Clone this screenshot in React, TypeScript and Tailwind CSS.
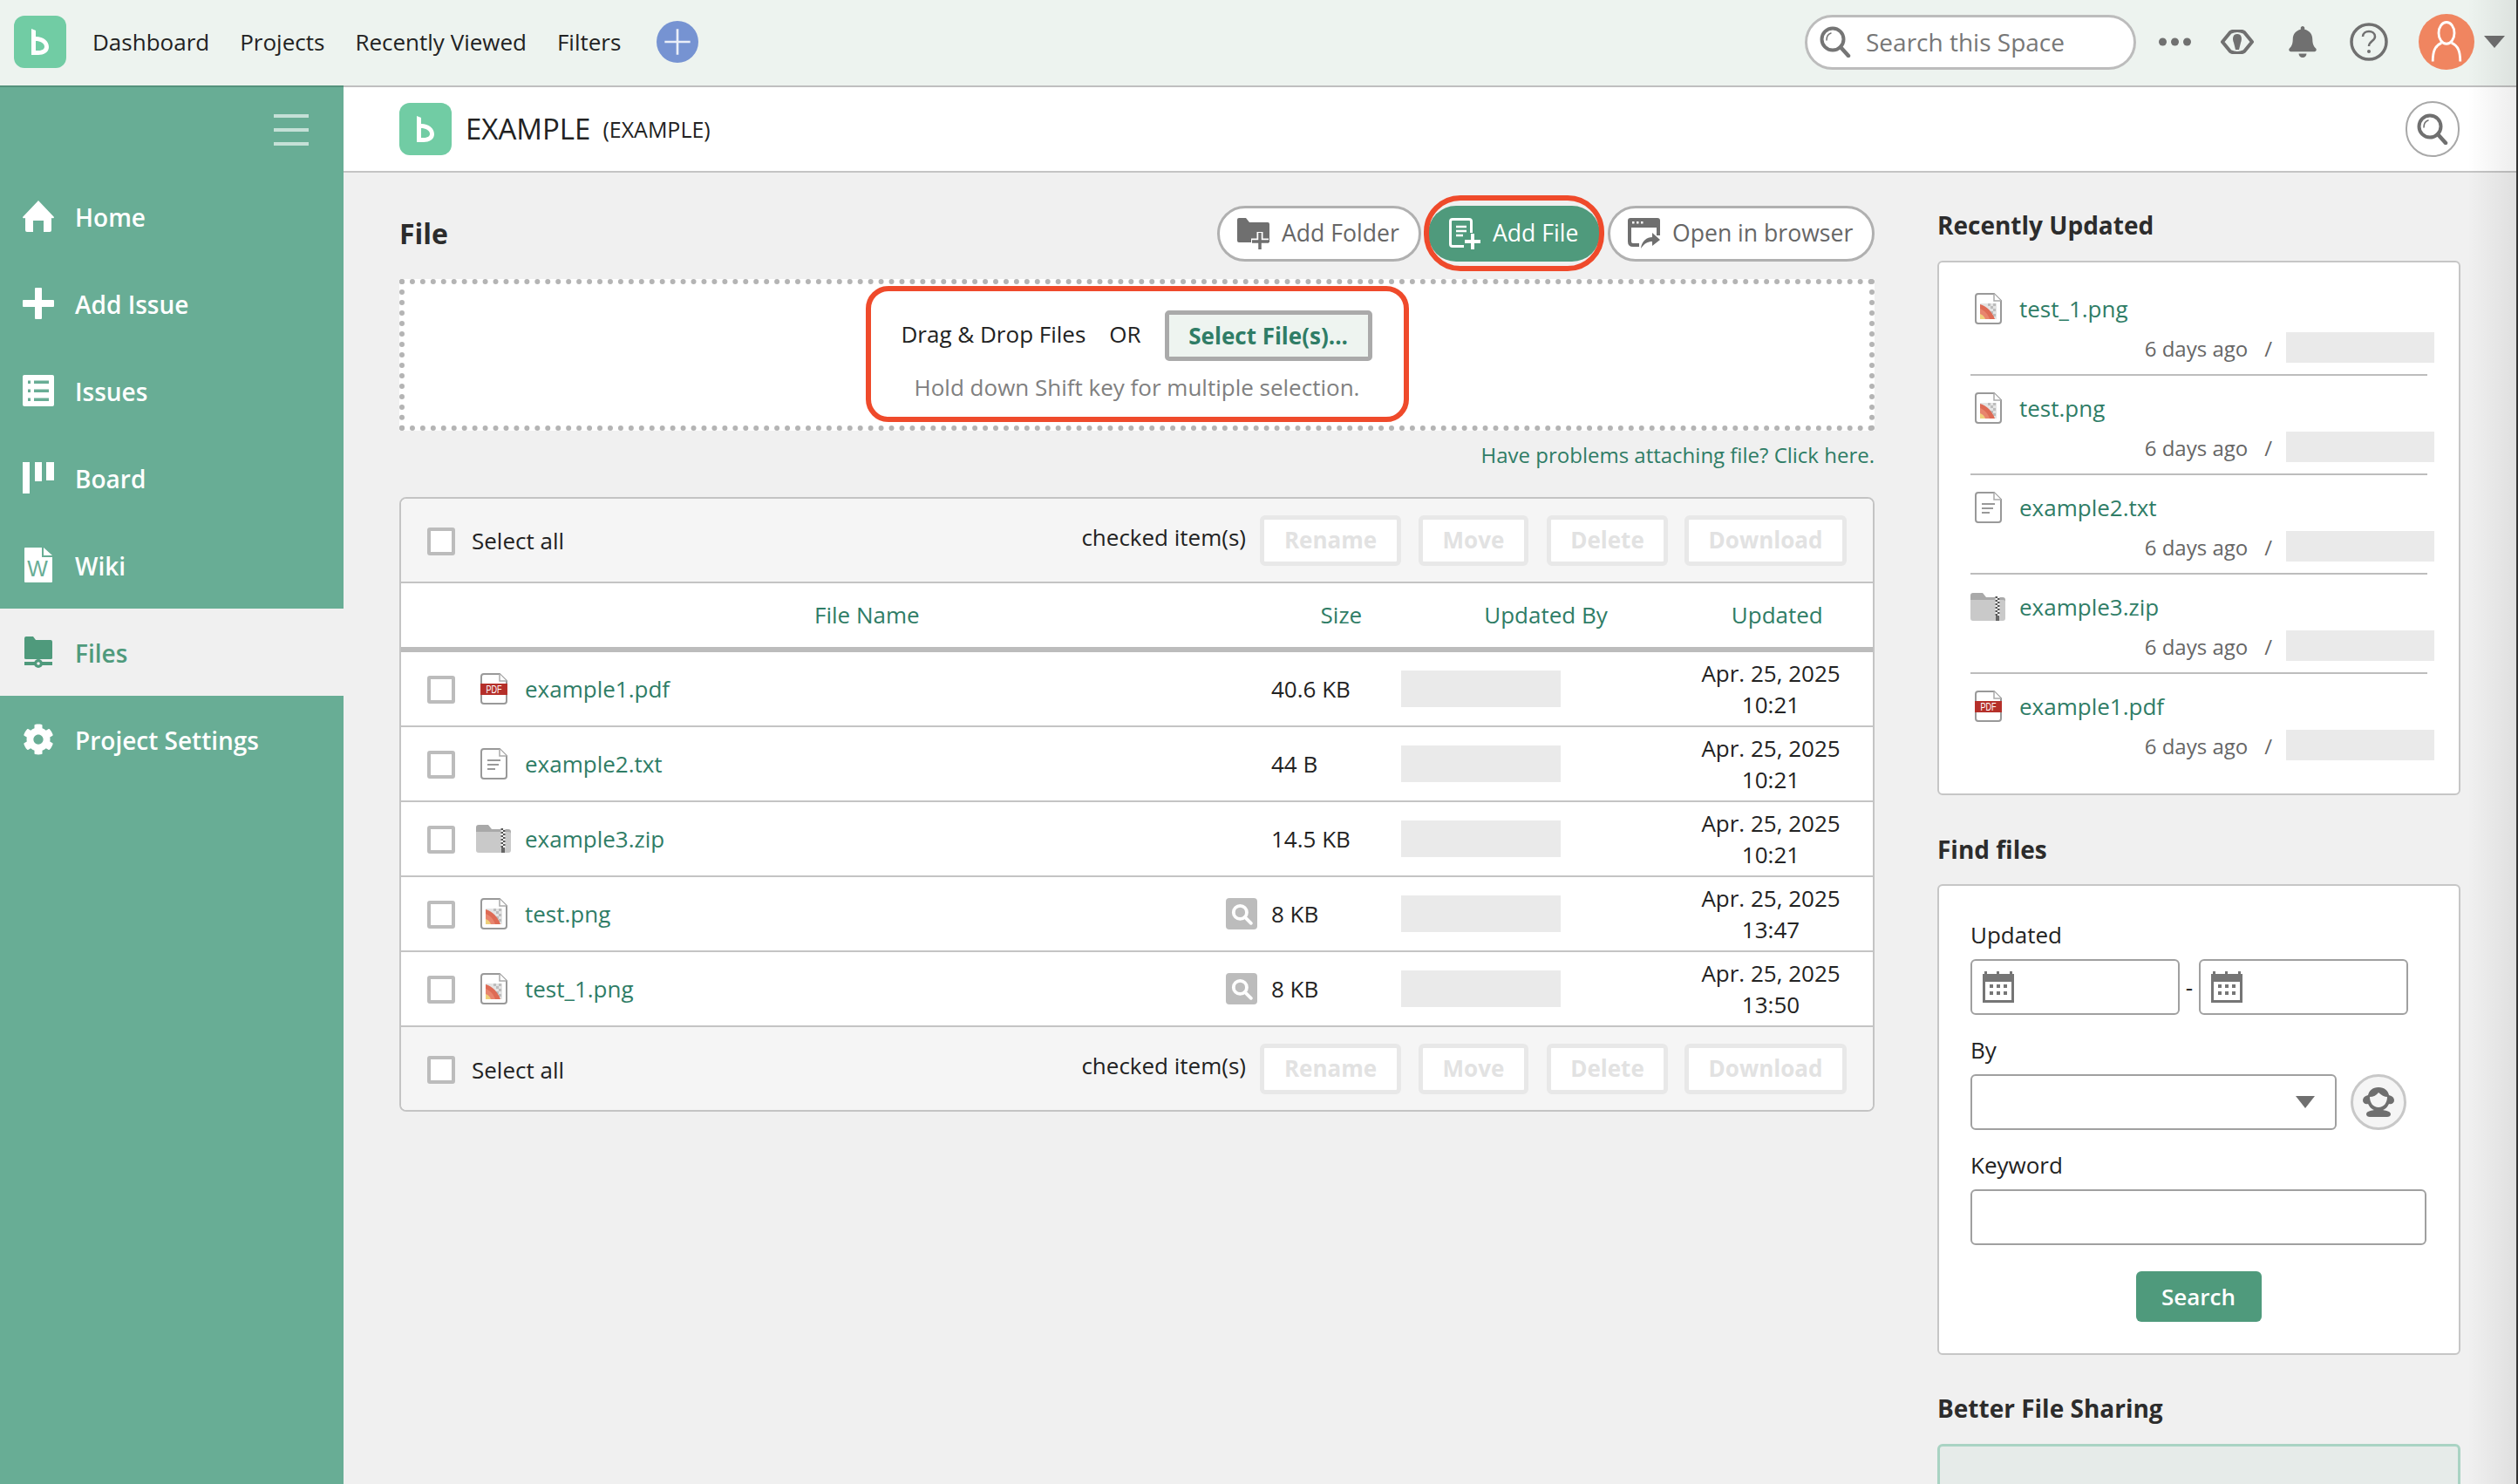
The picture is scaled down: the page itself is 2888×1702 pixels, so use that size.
import { FaBell, FaCog } from "react-icons/fa";

const files = [
  { name: "example1.pdf", kind: "pdf", size: "40.6 KB", time: "10:21" },
  { name: "example2.txt", kind: "txt", size: "44 B", time: "10:21" },
  { name: "example3.zip", kind: "zip", size: "14.5 KB", time: "10:21" },
  { name: "test.png", kind: "png", size: "8 KB", time: "13:47", preview: true },
  { name: "test_1.png", kind: "png", size: "8 KB", time: "13:50", preview: true },
];

const recent = [
  { name: "test_1.png", kind: "png" },
  { name: "test.png", kind: "png" },
  { name: "example2.txt", kind: "txt" },
  { name: "example3.zip", kind: "zip" },
  { name: "example1.pdf", kind: "pdf" },
];

function BacklogLogo() {
  return (
    <div className="flex h-[60px] w-[60px] shrink-0 items-center justify-center rounded-[12px] bg-[#71cca4]">
      <svg viewBox="0 0 60 60" className="h-[60px] w-[60px]">
        <path
          fill="#fff"
          fillRule="evenodd"
          d="M20 15 L25 17 V24 C34 24 40 29 40 36 C40 42 34 45 28 45 H20 Z M25 29 V40 H28 C32 40 35 38.5 35 35.5 C35 31.5 30 29 25 29 Z"
        />
      </svg>
    </div>
  );
}

function SearchIcon({ color = "#757575", className = "h-[36px] w-[36px]" }: { color?: string; className?: string }) {
  return (
    <svg viewBox="0 0 36 36" className={className} fill="none">
      <circle cx="15" cy="15" r="12.5" stroke={color} strokeWidth="4" />
      <path d="M24 24 L33 34" stroke={color} strokeWidth="4.5" strokeLinecap="round" />
      <path d="M8 16 C8 12 10 9 13 8" stroke={color} strokeWidth="1.5" strokeLinecap="round" />
    </svg>
  );
}

function FileIcon({ kind }: { kind: string }) {
  if (kind === "zip") {
    return (
      <svg viewBox="0 0 40 32" className="h-[32px] w-[40px]">
        <path d="M0 3 Q0 0 3 0 H14 L18 5 H37 Q40 5 40 8 V12 H0 Z" fill="#a9a9a9" />
        <path d="M0 8 H37 Q40 8 40 10 V29 Q40 32 37 32 H3 Q0 32 0 29 Z" fill="#c9c9c9" />
        <rect x="28.5" y="4" width="5" height="23" fill="#f2f2f2" />
        <path d="M28.5 4 h2.5 v2 h-2.5 z M31 6 h2.5 v2 h-2.5 z M28.5 8 h2.5 v2 h-2.5 z M31 10 h2.5 v2 h-2.5 z M28.5 12 h2.5 v2 h-2.5 z M31 14 h2.5 v2 h-2.5 z M28.5 16 h2.5 v2 h-2.5 z M31 18 h2.5 v2 h-2.5 z M28.5 20 h2.5 v2 h-2.5 z M31 22 h2.5 v2 h-2.5 z M28.5 24 h2.5 v2 h-2.5 z" fill="#555" />
        <rect x="29" y="26" width="4" height="6" fill="#666" />
      </svg>
    );
  }
  return (
    <svg viewBox="0 0 31 36" className="h-[36px] w-[31px]">
      <path
        d="M4 1 H22 L30 9 V32 Q30 35 27 35 H4 Q1 35 1 32 V4 Q1 1 4 1 Z"
        fill="#fff"
        stroke="#999"
        strokeWidth="2"
      />
      <path d="M22 1 V9 H30" fill="#fff" stroke="#aaa" strokeWidth="1.5" />
      {kind === "pdf" && (
        <>
          <rect x="0" y="12" width="31" height="13" fill="#b5302a" />
          <text
            x="15.5"
            y="23"
            textAnchor="middle"
            fontSize="13"
            textLength="18"
            lengthAdjust="spacingAndGlyphs"
            fill="#fff"
            fontFamily="'Liberation Sans', sans-serif"
          >
            PDF
          </text>
        </>
      )}
      {kind === "txt" && <path d="M8 14 H23 M8 19 H21 M8 24 H17" stroke="#999" strokeWidth="2" />}
      {kind === "png" && (
        <>
          <rect x="6" y="12" width="19" height="18" fill="#e4e4e4" />
          <path d="M15 12 h3 v3 h-3 z M21 12 h3 v3 h-3 z M18 15 h3 v3 h-3 z M21 18 h3 v3 h-3 z M18 21 h3 v3 h-3 z M21 24 h3 v3 h-3 z" fill="#bdbdbd" />
          <path d="M6 13 C14 15 20 22 23 30 H6 Z" fill="#de6b55" />
          <path d="M6 18 C11 20 15 24 17 30 H6 Z" fill="#e8856e" />
          <path d="M6 24 C9 25 11 27 12 30 H6 Z" fill="#efcf7b" />
        </>
      )}
    </svg>
  );
}

function Checkbox({ className = "" }: { className?: string }) {
  return <span className={`block h-[32px] w-[32px] shrink-0 rounded-[3px] border-4 border-[#bcbcbc] bg-white ${className}`} />;
}

function ToolbarRow({ className, boxOffset }: { className: string; boxOffset: string }) {
  const disabled =
    "flex h-[58px] items-center justify-center rounded-[6px] border-[5px] border-[#e8e8e8] bg-white text-[26px] font-bold text-[#e2e2e2]";
  return (
    <div className={`flex items-center bg-[#f5f5f5] pl-[30px] pr-[30px] ${className}`}>
      <Checkbox className={boxOffset} />
      <span className={`ml-[19px] text-[26px] text-[#222] ${boxOffset}`}>Select all</span>
      <span className="ml-auto -mt-[6px] text-[26px] text-[#222]">checked item(s)</span>
      <div className={`ml-[16px] w-[162px] ${disabled}`}>Rename</div>
      <div className={`ml-[20px] w-[126px] ${disabled}`}>Move</div>
      <div className={`ml-[21px] w-[139px] ${disabled}`}>Delete</div>
      <div className={`ml-[19px] w-[186px] ${disabled}`}>Download</div>
    </div>
  );
}

function NavItem({ label, active, children }: { label: string; active?: boolean; children: React.ReactNode }) {
  return (
    <div
      className={`flex h-[100px] items-center pl-[26px] ${
        active ? "bg-[#f0f0f0] text-[#4f9a7c]" : "text-white"
      }`}
    >
      <span className="flex h-[40px] w-[36px] shrink-0 items-center justify-center">{children}</span>
      <span className="ml-[24px] mt-[1px] text-[28px] font-semibold">{label}</span>
    </div>
  );
}

function CalendarIcon() {
  return (
    <svg viewBox="0 0 36 36" className="h-[36px] w-[36px]">
      <path fill="#757575" d="M2 3 H36 V36 H0 V3 Z M3 12 V33 H33 V12 Z" fillRule="evenodd" />
      <rect x="2" y="0" width="3" height="5" fill="#757575" />
      <rect x="16" y="0" width="3" height="5" fill="#757575" />
      <rect x="31" y="0" width="3" height="5" fill="#757575" />
      <path d="M8 15 h4 v4 h-4 z M16 15 h4 v4 h-4 z M24 15 h4 v4 h-4 z M8 23 h4 v4 h-4 z M16 23 h4 v4 h-4 z M24 23 h4 v4 h-4 z" fill="#757575" />
    </svg>
  );
}

export default function App() {
  return (
    <div className="relative flex h-[1702px] w-[2888px] flex-col overflow-hidden bg-[#f0f0f0] font-['Open_Sans',sans-serif] text-[26px] text-[#222]">
      {/* top bar */}
      <header className="flex h-[100px] shrink-0 items-center border-b-[2px] border-[#bfbfbf] bg-[#edf3ef] pb-[2px] pl-[16px]">
        <BacklogLogo />
        <nav className="ml-[30px] flex items-center gap-[35px] text-[26px] text-[#222]">
          <span>Dashboard</span>
          <span>Projects</span>
          <span>Recently Viewed</span>
          <span>Filters</span>
        </nav>
        <span className="ml-[41px] flex h-[48px] w-[48px] items-center justify-center rounded-full bg-[#7693d2]">
          <svg viewBox="0 0 24 24" className="h-[32px] w-[32px]">
            <path d="M12 1 V23 M1 12 H23" stroke="#fff" strokeWidth="2" opacity="0.85" />
          </svg>
        </span>

        <div className="ml-auto flex h-[63px] w-[380px] items-center rounded-full border-[3px] border-[#bcbcbc] bg-white pl-[14px]">
          <SearchIcon />
          <span className="ml-[17px] text-[28px] text-[#777]">Search this Space</span>
        </div>
        <svg viewBox="0 0 37 10" className="ml-[26px] h-[10px] w-[37px]">
          <circle cx="4.5" cy="5" r="4.5" fill="#707070" />
          <circle cx="18.5" cy="5" r="4.5" fill="#707070" />
          <circle cx="32.5" cy="5" r="4.5" fill="#707070" />
        </svg>
        <svg viewBox="0 0 38 28" className="ml-[34px] h-[28px] w-[38px]">
          <path d="M2 14 L11 3 Q19 -1 27 3 L36 14 L27 25 Q19 29 11 25 Z" fill="none" stroke="#707070" strokeWidth="4" strokeLinejoin="round" />
          <path d="M19 5 C24 5 25 10 23 15 L21 23 H17 L15 15 C13 10 14 5 19 5 Z" fill="#707070" />
        </svg>
        <FaBell className="ml-[37px] h-[36px] w-[38px] text-[#707070]" />
        <svg viewBox="0 0 44 44" className="ml-[35px] h-[44px] w-[44px]">
          <circle cx="22" cy="22" r="20" fill="none" stroke="#707070" strokeWidth="3.5" />
          <path d="M15 16 C15 8 29 8 29 16 C29 21 22 21 22 27" fill="none" stroke="#707070" strokeWidth="2.5" />
          <circle cx="22" cy="33" r="2" fill="#707070" />
        </svg>
        <span className="ml-[35px] flex h-[64px] w-[64px] items-center justify-center rounded-full bg-[#f08560]">
          <svg viewBox="0 0 32 44" className="h-[50px] w-[36px]" fill="none" stroke="#fff" strokeWidth="2.5">
            <ellipse cx="16" cy="13" rx="8" ry="11" />
            <path d="M11 23 C4 26 2 32 2 42 M21 23 C28 26 30 32 30 42" />
          </svg>
        </span>
        <svg viewBox="0 0 24 14" className="ml-[11px] mr-[15px] h-[14px] w-[24px]">
          <path d="M0 0 H24 L12 14 Z" fill="#6f6f6f" />
        </svg>
      </header>

      <div className="flex min-h-0 flex-1">
        {/* sidebar */}
        <aside className="-mt-[2px] w-[394px] shrink-0 border-t-[2px] border-[#54927c] bg-[#68ad95]">
          <div className="flex h-[98px] flex-col items-end gap-[12px] pr-[40px] pt-[31px]">
            <span className="block h-[4px] w-[40px] bg-[#c5e0d7]" />
            <span className="block h-[4px] w-[40px] bg-[#c5e0d7]" />
            <span className="block h-[4px] w-[40px] bg-[#c5e0d7]" />
          </div>
          <NavItem label="Home">
            <svg viewBox="0 0 36 36" className="h-[36px] w-[36px]">
              <path
                fill="#fff"
                d="M18 0 L36 19 Q36 21 33 20 V34 Q33 36 31 36 H24 V23 H12 V36 H5 Q3 36 3 34 V20 Q0 21 0 19 Z"
              />
            </svg>
          </NavItem>
          <NavItem label="Add Issue">
            <svg viewBox="0 0 36 36" className="h-[36px] w-[36px]">
              <path fill="#fff" d="M14 1 Q14 0 15 0 H21 Q22 0 22 1 V14 H35 Q36 14 36 15 V21 Q36 22 35 22 H22 V35 Q22 36 21 36 H15 Q14 36 14 35 V22 H1 Q0 22 0 21 V15 Q0 14 1 14 H14 Z" />
            </svg>
          </NavItem>
          <NavItem label="Issues">
            <svg viewBox="0 0 36 36" className="h-[36px] w-[36px]">
              <rect width="36" height="36" rx="2" fill="#fff" />
              <path d="M6 6.5 H9 V10 H6 Z M13 6.5 H30 V10 H13 Z M6 16.5 H9 V20 H6 Z M13 16.5 H30 V20 H13 Z M6 26.5 H9 V30 H6 Z M13 26.5 H30 V30 H13 Z" fill="#68ad95" />
            </svg>
          </NavItem>
          <NavItem label="Board">
            <svg viewBox="0 0 36 36" className="h-[36px] w-[36px]">
              <path fill="#fff" d="M0 0 H8 V36 H0 Z M14 0 H22 V22 H14 Z M27 0 H36 V21 H27 Z" />
            </svg>
          </NavItem>
          <NavItem label="Wiki">
            <svg viewBox="0 0 32 40" className="h-[40px] w-[32px]">
              <path fill="#fff" d="M1 0 H20 V11 H32 V39 Q32 40 31 40 H1 Q0 40 0 39 V1 Q0 0 1 0 Z M22 0 L32 9 H22 Z" />
              <text x="15" y="33" textAnchor="middle" fontSize="25" fill="#68ad95" fontFamily="'Liberation Sans', sans-serif">
                W
              </text>
            </svg>
          </NavItem>
          <NavItem label="Files" active>
            <svg viewBox="0 0 32 36" className="h-[36px] w-[32px]">
              <path fill="#4f9a7c" d="M0 2 Q0 0 2 0 H10 L13 4 H30 Q32 4 32 6 V25 Q32 26 30 26 H2 Q0 26 0 25 Z" />
              <rect x="0" y="29" width="32" height="4" fill="#4f9a7c" />
              <circle cx="16" cy="31" r="5" fill="#4f9a7c" />
              <circle cx="16" cy="31" r="1.8" fill="#f0f0f0" />
            </svg>
          </NavItem>
          <NavItem label="Project Settings">
            <FaCog className="h-[36px] w-[36px]" />
          </NavItem>
        </aside>

        <main className="min-w-0 flex-1">
          {/* project header */}
          <div className="flex h-[98px] items-center border-b-[2px] border-[#c4c4c4] bg-white pl-[64px] pr-[67px]">
            <BacklogLogo />
            <span className="ml-[16px] text-[33px] font-medium text-[#222]">EXAMPLE</span>
            <span className="ml-[14px] mt-[2px] text-[25px] font-medium text-[#222]">(EXAMPLE)</span>
            <span className="ml-auto flex h-[64px] w-[62px] items-center justify-center rounded-full border-[2px] border-[#a8a8a8] bg-white">
              <SearchIcon color="#707070" />
            </span>
          </div>

          <div className="flex gap-[72px] pl-[64px]">
            {/* left column */}
            <div className="w-[1692px] shrink-0 pt-[38px]">
              <div className="flex h-[64px] items-center">
                <h2 className="text-[32px] font-bold text-[#2c2c2c]">File</h2>
                <div className="ml-auto flex gap-[8px]">
                  <button className="flex h-[64px] w-[234px] items-center rounded-full border-[3px] border-[#b0b0b0] bg-white pl-[20px] text-[26.6px] text-[#666]">
                    <svg viewBox="0 0 37 36" className="h-[36px] w-[37px]">
                      <path fill="#6f6f6f" d="M0 2 Q0 0 2 0 H10 L14 5 H35 Q37 5 37 7 V28 H2 Q0 28 0 26 Z" />
                      <path d="M26 16 V36 M16 27 H36" stroke="#fff" strokeWidth="7" />
                      <path d="M26 17 V36 M17 27 H36" stroke="#6f6f6f" strokeWidth="3.5" />
                    </svg>
                    <span className="ml-[14px]">Add Folder</span>
                  </button>
                  <div className="relative">
                    <button className="flex h-[64px] w-[197px] items-center rounded-full bg-[#4f9a7c] pl-[24px] text-[26.6px] text-white">
                      <svg viewBox="0 0 36 36" className="h-[36px] w-[36px]" fill="none" stroke="#fff">
                        <path d="M4 1.5 H23 Q25.5 1.5 25.5 4 V17 M17 32.5 H4 Q1.5 32.5 1.5 30 V4 Q1.5 1.5 4 1.5" strokeWidth="3" />
                        <path d="M8 10 H20 M8 15 H20 M8 20 H16" strokeWidth="2.4" />
                        <path d="M27 18 V36 M18 27 H36" strokeWidth="4" />
                      </svg>
                      <span className="ml-[14px]">Add File</span>
                    </button>
                    <span className="absolute -bottom-[11px] -left-[5px] -right-[5px] -top-[12px] rounded-[42px] border-[6px] border-[#ef4a2b]" />
                  </div>
                  <button className="ml-[1px] flex h-[64px] w-[306px] items-center rounded-full border-[3px] border-[#b0b0b0] bg-white pl-[20px] text-[26.6px] text-[#666]">
                    <svg viewBox="0 0 37 36" className="h-[36px] w-[37px]" fill="none">
                      <path d="M3 0 H34 Q37 0 37 3 V11 H0 V3 Q0 0 3 0 Z" fill="#6f6f6f" />
                      <path d="M5 4 h2.5 v2.5 h-2.5 z M10 4 h2.5 v2.5 h-2.5 z M15 4 h2.5 v2.5 h-2.5 z" fill="#fff" />
                      <path d="M2 8 V27 Q2 31 6 31 H13 M35 8 V20" stroke="#6f6f6f" strokeWidth="4" />
                      <path d="M15 35 C16 26 22 22 28 22 V17 L37 25 L28 32 V27 C23 27 19 29 15 35 Z" fill="#6f6f6f" />
                    </svg>
                    <span className="ml-[14px]">Open in browser</span>
                  </button>
                </div>
              </div>

              {/* drop zone */}
              <div className="mt-[20px] flex h-[174px] justify-center border-[6px] border-dotted border-[#b4b4b4] bg-white pt-[2px]">
                <div className="h-[156px] w-[623px] rounded-[26px] border-[6px] border-[#ef4a2b]">
                  <div className="flex items-center pl-[35px] pt-[22px]">
                    <span className="-mt-[4px] text-[26px] text-[#222]">Drag &amp; Drop Files</span>
                    <span className="ml-[27px] -mt-[4px] text-[26px] text-[#222]">OR</span>
                    <button className="ml-[27px] flex h-[58px] w-[238px] items-center justify-center rounded-[5px] border-[5px] border-[#aaa] bg-[#eef4f0] text-[26px] font-bold text-[#2f7d66]">
                      Select File(s)...
                    </button>
                  </div>
                  <p className="mt-[12px] text-center text-[26px] leading-[36px] text-[#808080]">
                    Hold down Shift key for multiple selection.
                  </p>
                </div>
              </div>
              <p className="mt-[10px] text-right text-[24px] leading-[36px] text-[#2f7d66]">
                Have problems attaching file? Click here.
              </p>

              {/* table */}
              <div className="mt-[30px] overflow-hidden rounded-[8px] border-[2px] border-[#c4c4c4] bg-white">
                <ToolbarRow className="h-[97px] border-b-[2px] border-[#c4c4c4]" boxOffset="mt-[2px]" />
                <div className="flex h-[79px] items-center border-b-[6px] border-[#bcbcbc] pl-[474px] text-[26px] text-[#2f7d66]">
                  <span>File Name</span>
                  <span className="ml-[460px]">Size</span>
                  <span className="ml-[140px]">Updated By</span>
                  <span className="ml-[142px]">Updated</span>
                </div>
                {files.map((f) => (
                  <div
                    key={f.name}
                    className="grid h-[86px] grid-cols-[946px_201px_343px_162px] items-center border-b-[2px] border-[#c4c4c4]"
                  >
                    <div className="flex items-center pl-[30px]">
                      <Checkbox className="mt-[1px]" />
                      <span className="ml-[24px] flex w-[40px] justify-center">
                        <FileIcon kind={f.kind} />
                      </span>
                      <span className="ml-[16px] text-[#2f7d66]">{f.name}</span>
                    </div>
                    <div className="flex items-center">
                      <span className="flex h-[36px] w-[36px] items-center justify-center rounded-[4px] bg-[#bcbcbc]" style={{ visibility: f.preview ? "visible" : "hidden" }}>
                        <svg viewBox="0 0 24 24" className="h-[26px] w-[26px]" fill="none" stroke="#fff">
                          <circle cx="10.5" cy="10.5" r="7" strokeWidth="3.5" />
                          <path d="M15.5 15.5 L22 22" strokeWidth="3.5" strokeLinecap="round" />
                        </svg>
                      </span>
                      <span className="ml-[16px] text-[#222]">{f.size}</span>
                    </div>
                    <div className="h-[42px] w-[183px] bg-[#eaeaea]" />
                    <div className="text-center text-[26px] leading-[36px] text-[#222]">
                      Apr. 25, 2025
                      <br />
                      {f.time}
                    </div>
                  </div>
                ))}
                <ToolbarRow className="h-[95px]" boxOffset="mt-[3px]" />
              </div>
            </div>

            {/* right column */}
            <div className="w-[600px] shrink-0 pt-[42px]">
              <h3 className="text-[28px] font-bold leading-[36px] text-[#2c2c2c]">Recently Updated</h3>
              <div className="mt-[23px] h-[613px] rounded-[6px] border-[2px] border-[#c6c6c6] bg-white pl-[36px] pt-[35px]">
                {recent.map((r, i) => (
                  <div key={r.name} className="h-[114px] w-[524px]">
                    <div className="flex h-[36px] items-center">
                      <span className="flex w-[40px] justify-center">
                        <FileIcon kind={r.kind} />
                      </span>
                      <span className="ml-[16px] text-[#2f7d66]">{r.name}</span>
                    </div>
                    <div className="-mr-[8px] mt-[9px] flex h-[35px] items-center justify-end text-[24px] text-[#666]">
                      <span className="pt-[3px]">6 days ago</span>
                      <span className="ml-[19px] pt-[3px]">/</span>
                      <span className="ml-[16px] h-[35px] w-[170px] bg-[#eaeaea]" />
                    </div>
                    {i < recent.length - 1 && <div className="mt-[13px] h-[2px] bg-[#bdbdbd]" />}
                  </div>
                ))}
              </div>

              <h3 className="mt-[44px] text-[28px] font-bold leading-[36px] text-[#2c2c2c]">Find files</h3>
              <div className="mt-[22px] h-[540px] rounded-[6px] border-[2px] border-[#c6c6c6] bg-white pl-[36px] pr-[37px] pt-[38px]">
                <label className="block leading-[36px]">Updated</label>
                <div className="mt-[10px] flex items-center">
                  <div className="flex h-[64px] w-[240px] items-center rounded-[6px] border-[2px] border-[#a0a0a0] pl-[12px]">
                    <CalendarIcon />
                  </div>
                  <span className="w-[22px] text-center">-</span>
                  <div className="flex h-[64px] w-[240px] items-center rounded-[6px] border-[2px] border-[#a0a0a0] pl-[12px]">
                    <CalendarIcon />
                  </div>
                </div>
                <label className="mt-[22px] block leading-[36px]">By</label>
                <div className="mt-[10px] flex items-center">
                  <div className="flex h-[64px] w-[420px] items-center justify-end rounded-[6px] border-[2px] border-[#a0a0a0] pr-[23px]">
                    <svg viewBox="0 0 22 14" className="h-[14px] w-[22px]">
                      <path d="M0 0 H22 L11 14 Z" fill="#6f6f6f" />
                    </svg>
                  </div>
                  <span className="ml-[16px] flex h-[64px] w-[64px] items-center justify-center rounded-full border-[3px] border-[#c8c8c8] bg-[#f5f5f5]">
                    <svg viewBox="0 0 36 34" className="h-[34px] w-[36px]">
                      <path fill="#6f6f6f" d="M18 0 C25 0 29 4 30 9 C34 10 36 12 36 15 C36 18 33 20 30 19 C28 23 26 25 23 26 C28 27 32 28 32 31 C32 33 30 34 28 34 H8 C6 34 4 33 4 31 C4 28 8 27 13 26 C10 25 8 23 6 19 C3 20 0 18 0 15 C0 12 2 10 6 9 C7 4 11 0 18 0 Z" />
                      <path fill="#f5f5f5" d="M8 11 C12 11 16 9 18 6 C21 9 25 11 28 11 C28 18 24 23 18 23 C12 23 8 18 8 11 Z" />
                    </svg>
                  </span>
                </div>
                <label className="mt-[22px] block leading-[36px]">Keyword</label>
                <div className="mt-[10px] h-[64px] rounded-[6px] border-[2px] border-[#a0a0a0]" />
                <div className="mt-[30px] flex justify-center">
                  <button className="flex h-[58px] w-[144px] items-center justify-center rounded-[6px] bg-[#4f9a7c] text-[26px] font-semibold text-white">
                    Search
                  </button>
                </div>
              </div>

              <h3 className="mt-[43px] text-[28px] font-bold leading-[36px] text-[#2c2c2c]">Better File Sharing</h3>
              <div className="mt-[23px] h-[120px] rounded-[6px] border-[3px] border-[#a9d3c3] bg-[#e6ebe9]" />
            </div>
          </div>
        </main>
      </div>

      {/* scroll shadow on the right edge */}
      <div className="pointer-events-none absolute bottom-0 right-0 top-0 w-[58px] border-r-[2px] border-[#333] bg-gradient-to-r from-transparent to-black/[0.07]" />
    </div>
  );
}
